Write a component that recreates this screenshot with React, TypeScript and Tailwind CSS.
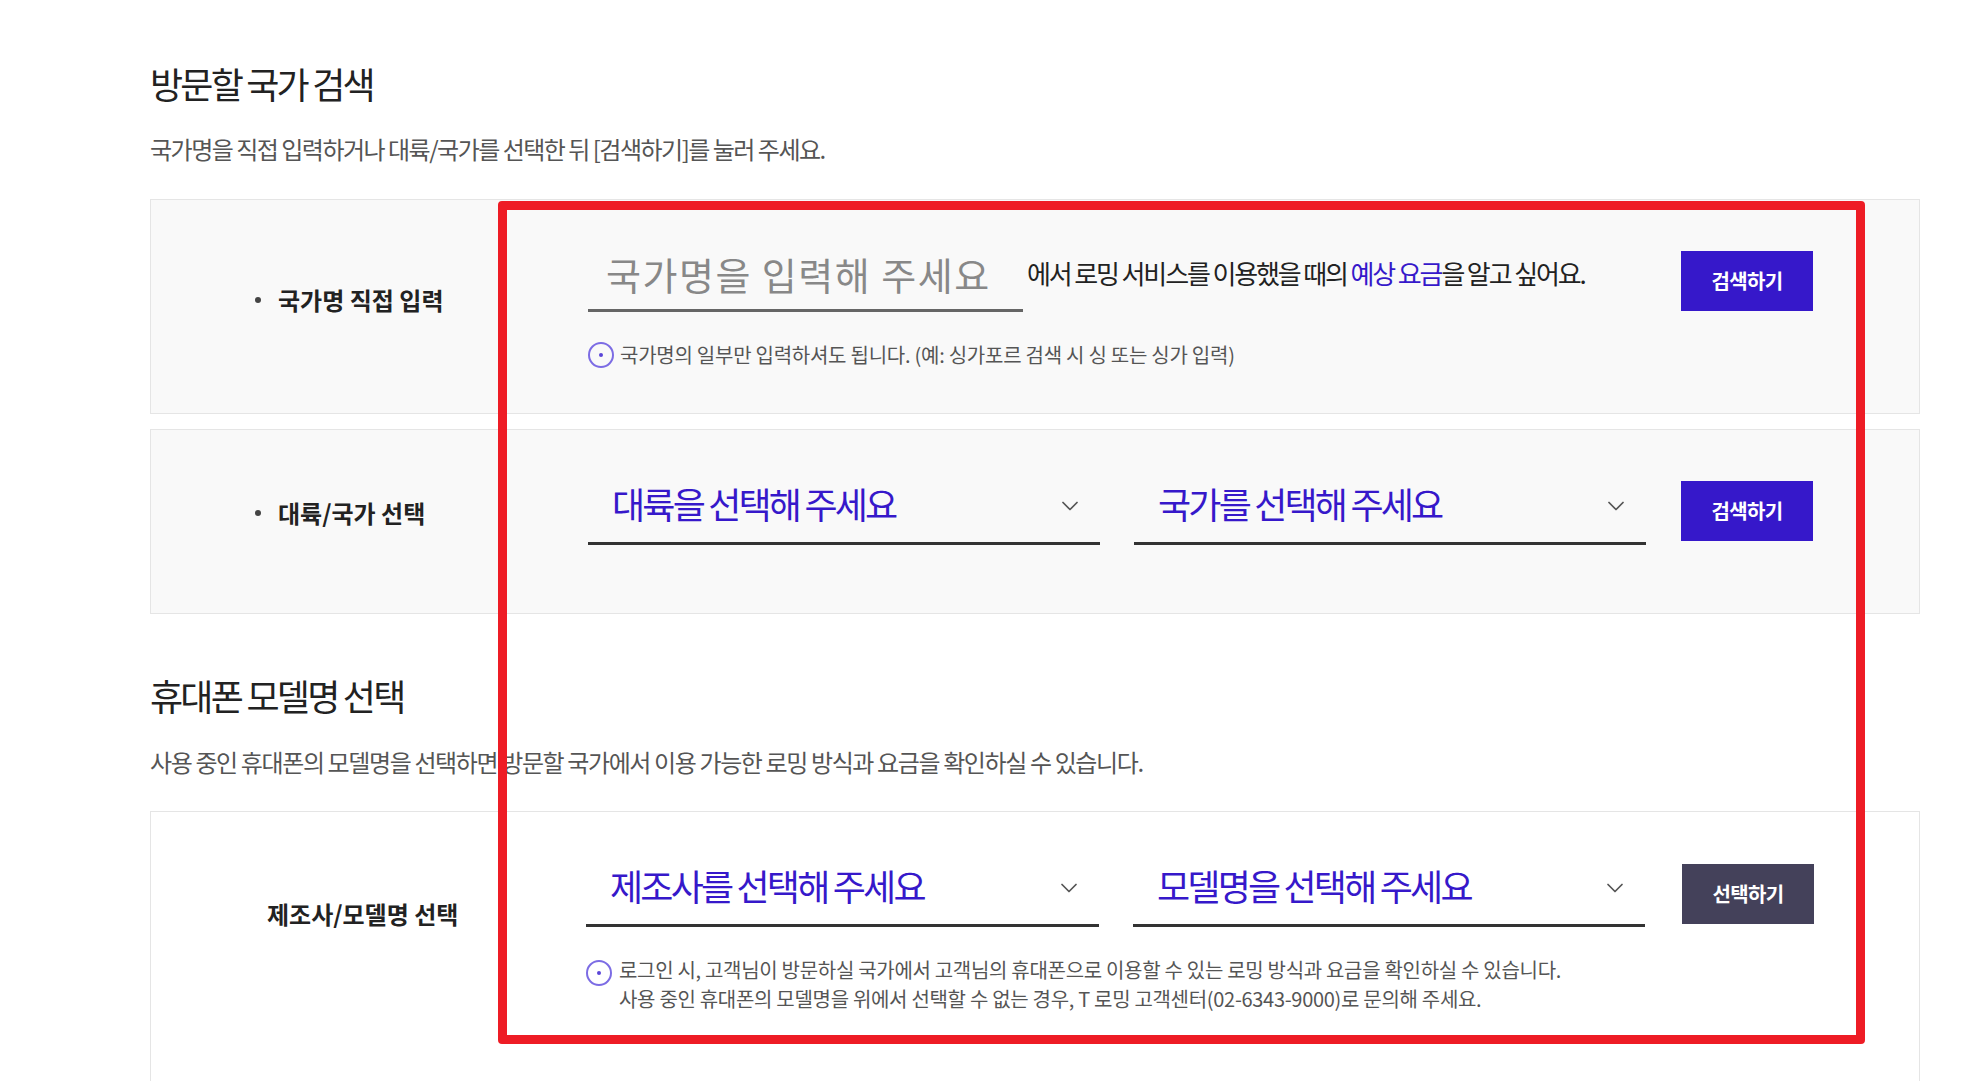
import { ChevronDown } from 'lucide-react';

const font = { fontFamily: '"Noto Sans CJK KR", "Noto Sans", sans-serif' };

function InfoIcon() {
  return (
    <span className="w-[26px] h-[26px] shrink-0 rounded-full border-2 border-[#7c6ce4] flex items-center justify-center">
      <span className="w-[4px] h-[4px] rounded-full bg-[#5a45d8]" />
    </span>
  );
}

function SelectBox({ label, width }: { label: string; width: string }) {
  return (
    <div className={`${width} h-[72px] border-b-[3px] border-[#333] flex items-center justify-between pl-6 pr-[16px] pb-[6px]`}>
      <span className="text-[36px] leading-[48px] tracking-[-2.8px] text-[#3618ca] -mt-[4px]">{label}</span>
      <ChevronDown className="w-[28px] h-[28px] text-[#555] mt-[3px]" strokeWidth={1.5} />
    </div>
  );
}

function ActionButton({ label, dark }: { label: string; dark?: boolean }) {
  return (
    <button className={`w-[132px] h-[60px] shrink-0 text-white font-bold text-[20px] tracking-[-0.7px] ${dark ? 'bg-[#44415a]' : 'bg-[#3618ca]'}`}>
      {label}
    </button>
  );
}

export default function App() {
  return (
    <div className="relative h-[1081px] overflow-hidden bg-white text-[#333]" style={font}>
      <div className="pl-[150px] pr-[43px] pt-[59px]">
        <h2 className="text-[36px] leading-[48px] tracking-[-2.8px] text-[#222] font-normal">방문할 국가 검색</h2>
        <p className="mt-[24px] text-[24px] leading-[36px] tracking-[-1.5px] text-[#555]">
          국가명을 직접 입력하거나 대륙/국가를 선택한 뒤 [검색하기]를 눌러 주세요.
        </p>

        <div className="mt-[32px] h-[215px] border border-[#e5e5e5] bg-[#f9f9f9] flex">
          <div className="w-[437px] shrink-0 flex items-center pl-[104px] pb-[13px]">
            <span className="w-[6px] h-[6px] rounded-full bg-[#444] mr-[17px]" />
            <span className="text-[24px] font-bold text-[#222]">국가명 직접 입력</span>
          </div>
          <div className="flex-1 pr-[106px] pt-[51px]">
            <div className="flex items-start">
              <div className="w-[435px] h-[62px] border-b-[3px] border-[#666] pl-[18px] text-[38px] leading-[48px] tracking-[1.5px] text-[#888] -mt-[1px]">
                국가명을 입력해 주세요
              </div>
              <p className="ml-[4px] flex-1 text-[26px] leading-[40px] tracking-[-2.13px] text-[#222] pt-[2px]">
                에서 로밍 서비스를 이용했을 때의 <span className="text-[#3618ca]">예상 요금</span>을 알고 싶어요.
              </p>
              <ActionButton label="검색하기" />
            </div>
            <div className="flex items-center mt-[30px] gap-[6px]">
              <InfoIcon />
              <span className="text-[20px] leading-[26px] tracking-[-0.25px] text-[#555]">
                국가명의 일부만 입력하셔도 됩니다. (예: 싱가포르 검색 시 싱 또는 싱가 입력)
              </span>
            </div>
          </div>
        </div>

        <div className="mt-[15px] h-[185px] border border-[#e5e5e5] bg-[#f9f9f9] flex">
          <div className="w-[437px] shrink-0 flex items-center pl-[104px] pb-[18px]">
            <span className="w-[6px] h-[6px] rounded-full bg-[#444] mr-[17px]" />
            <span className="text-[24px] font-bold text-[#222]">대륙/국가 선택</span>
          </div>
          <div className="flex-1 pr-[105px] pt-[51px] flex gap-[35px] items-start">
            <div className="flex gap-[34px] -mt-[8px]">
              <SelectBox label="대륙을 선택해 주세요" width="w-[512px]" />
              <SelectBox label="국가를 선택해 주세요" width="w-[512px]" />
            </div>
            <ActionButton label="검색하기" />
          </div>
        </div>

        <h2 className="mt-[57px] text-[36px] leading-[48px] tracking-[-2.75px] text-[#222] font-normal">휴대폰 모델명 선택</h2>
        <p className="mt-[25px] text-[24px] leading-[36px] tracking-[-1.38px] text-[#555]">
          사용 중인 휴대폰의 모델명을 선택하면 방문할 국가에서 이용 가능한 로밍 방식과 요금을 확인하실 수 있습니다.
        </p>

        <div className="mt-[31px] h-[400px] border border-[#e5e5e5] bg-white flex">
          <div className="w-[435px] shrink-0 pl-[116px] pt-[84px]">
            <span className="text-[24px] leading-[36px] font-bold text-[#222]">제조사/모델명 선택</span>
          </div>
          <div className="flex-1 pr-[104px] pt-[52px]">
            <div className="flex gap-[37px] items-start">
              <div className="flex gap-[34px] -mt-[9px]">
                <SelectBox label="제조사를 선택해 주세요" width="w-[513px]" />
                <SelectBox label="모델명을 선택해 주세요" width="w-[512px]" />
              </div>
              <ActionButton label="선택하기" dark />
            </div>
            <div className="flex items-start mt-[33px] gap-[7px]">
              <InfoIcon />
              <p className="text-[20px] leading-[29px] tracking-[-0.3px] text-[#555] -mt-[5px]">
                로그인 시, 고객님이 방문하실 국가에서 고객님의 휴대폰으로 이용할 수 있는 로밍 방식과 요금을 확인하실 수 있습니다.
                <br />
                사용 중인 휴대폰의 모델명을 위에서 선택할 수 없는 경우, T 로밍 고객센터(02-6343-9000)로 문의해 주세요.
              </p>
            </div>
          </div>
        </div>
      </div>

      {/* red highlight box drawn over the page */}
      <div className="absolute left-[498px] top-[201px] w-[1367px] h-[843px] border-[9px] border-[#ee1c25] rounded-[4px] pointer-events-none" />
    </div>
  );
}
